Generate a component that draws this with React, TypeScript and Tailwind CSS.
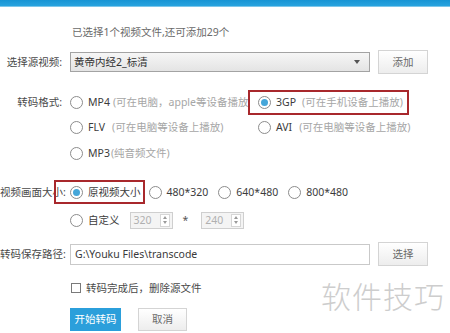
import React from 'react';

const font = "font-['Noto_Sans','Noto_Sans_CJK_SC',sans-serif]";

function Radio({ checked = false }: { checked?: boolean }) {
    return (
        <span className="w-[13px] h-[13px] rounded-full border border-[#8c8c8c] bg-white flex items-center justify-center shrink-0">
            {checked && <span className="w-[7px] h-[7px] rounded-full bg-[#45a6d9]" />}
        </span>
    );
}

// red annotation frame drawn over an option
function Mark({ className }: { className: string }) {
    return <span className={`absolute border-2 border-[#a8282c] pointer-events-none ${className}`} />;
}

function Option({ label, note, checked, noteGap = 'ml-[3px]' }: { label: string; note?: string; checked?: boolean; noteGap?: string }) {
    return (
        <span className="flex items-center">
            <Radio checked={checked} />
            <span className="ml-[5px] text-[#3c3c3c]">{label}</span>
            {note && <span className={`${noteGap} text-[#a6a6a6]`}>{note}</span>}
        </span>
    );
}

function Spin({ value }: { value: string }) {
    return (
        <span className="w-[43px] h-[17px] border border-[#cfcfcf] bg-[#f4f4f4] flex items-center">
            <span className="flex-1 pl-[3px] text-[#b0b0b0]">{value}</span>
            <span className="w-[10px] h-[13px] mr-[2px] border border-[#d6d6d6] bg-white flex flex-col items-center justify-around">
                <span className="w-0 h-0 border-x-[2.5px] border-x-transparent border-b-[3px] border-b-[#9a9a9a]" />
                <span className="w-0 h-0 border-x-[2.5px] border-x-transparent border-t-[3px] border-t-[#9a9a9a]" />
            </span>
        </span>
    );
}

function Label({ children }: { children?: React.ReactNode }) {
    return <span className="w-[62px] shrink-0 text-right whitespace-nowrap text-[#4a4a4a]">{children}</span>;
}

function GrayButton({ children, className = '' }: { children: React.ReactNode; className?: string }) {
    return (
        <button className={`border border-[#d4d4d4] bg-gradient-to-b from-white to-[#ededed] text-[#6a6a6a] flex items-center justify-center ${className}`}>
            {children}
        </button>
    );
}

export default function App() {
    return (
        <div className={`relative w-[450px] h-[333px] bg-white overflow-hidden text-[10.5px] leading-none ${font}`}>
            {/* top bar */}
            <div className="h-[7px] bg-gradient-to-b from-[#1794d4] to-[#27a3df] border-b border-[#7cc6ea]" />

            <div className="h-[24px] mt-[13px] flex items-center pl-[72px] text-[#6a6a6a]">
                已选择1个视频文件,还可添加29个
            </div>

            {/* source */}
            <div className="h-[24px] mt-[6px] flex items-center">
                <Label>选择源视频:</Label>
                <div className="ml-[8px] w-[300px] h-[20px] border border-[#a3a3a3] bg-gradient-to-b from-[#f6f6f6] to-[#e4e4e4] flex items-center pl-[3px] text-[#333]">
                    <span className="flex-1">黄帝内经2_标清</span>
                    <span className="mr-[9px] w-0 h-0 border-x-[3.5px] border-x-transparent border-t-[4px] border-t-[#555]" />
                </div>
                <GrayButton className="ml-[8px] w-[50px] h-[24px]">添加</GrayButton>
            </div>

            {/* format */}
            <div className="h-[24px] mt-[16px] flex items-center">
                <Label>转码格式:</Label>
                <div className="ml-[8px] w-[188px] whitespace-nowrap overflow-hidden">
                    <Option label="MP4" note="(可在电脑，apple等设备播放" />
                </div>
                <span className="relative">
                    <Option label="3GP" note="(可在手机设备上播放)" checked noteGap="ml-[6px]" />
                    <Mark className="-left-[10px] -right-[6px] -top-[6px] -bottom-[6px]" />
                </span>
            </div>
            <div className="h-[24px] mt-[1px] flex items-center">
                <Label />
                <div className="ml-[8px] w-[188px] whitespace-nowrap">
                    <Option label="FLV" note="(可在电脑等设备上播放)" noteGap="ml-[7px]" />
                </div>
                <Option label="AVI" note="(可在电脑等设备上播放)" noteGap="ml-[7px]" />
            </div>
            <div className="h-[24px] mt-[2px] flex items-center">
                <Label />
                <div className="ml-[8px]">
                    <Option label="MP3" note="(纯音频文件)" noteGap="ml-[1px]" />
                </div>
            </div>

            {/* size */}
            <div className="h-[24px] mt-[15px] flex items-center">
                <Label>视频画面大小:</Label>
                <span className="relative ml-[8px]">
                    <Option label="原视频大小" checked />
                    <Mark className="-left-[16px] -right-[4px] -top-[6px] -bottom-[5px]" />
                </span>
                <span className="ml-[8px]"><Option label="480*320" /></span>
                <span className="ml-[10px]"><Option label="640*480" /></span>
                <span className="ml-[10px]"><Option label="800*480" /></span>
            </div>
            <div className="h-[24px] mt-[4px] flex items-center">
                <Label />
                <span className="ml-[8px]"><Option label="自定义" /></span>
                <span className="ml-[10px]"><Spin value="320" /></span>
                <span className="ml-[10px] mr-[13px] text-[#555]">*</span>
                <Spin value="240" />
            </div>

            {/* path */}
            <div className="h-[24px] mt-[10px] flex items-center">
                <Label>转码保存路径:</Label>
                <div className="ml-[8px] w-[300px] h-[21px] border border-[#c9c9c9] bg-white flex items-center pl-[4px] text-[#3a3a3a]">
                    G:\Youku Files\transcode
                </div>
                <GrayButton className="ml-[8px] w-[50px] h-[24px]">选择</GrayButton>
            </div>

            {/* delete source */}
            <div className="h-[24px] mt-[10px] flex items-center pl-[71px] text-[#4a4a4a]">
                <span className="w-[10px] h-[10px] border border-[#7a7a7a] bg-white" />
                <span className="ml-[5px]">转码完成后，删除源文件</span>
            </div>

            {/* actions */}
            <div className="mt-[8px] flex items-center pl-[70px]">
                <button className="w-[51px] h-[23px] bg-[#2b9fdb] text-white flex items-center justify-center">开始转码</button>
                <GrayButton className="ml-[17px] w-[49px] h-[23px]">取消</GrayButton>
            </div>

            {/* watermark */}
            <span className="absolute left-[321px] top-[280px] text-[30px] leading-none text-[#cdcdcd] font-['Noto_Sans_CJK_SC',sans-serif] font-light tracking-[1px]">
                软件技巧
            </span>
        </div>
    );
}
